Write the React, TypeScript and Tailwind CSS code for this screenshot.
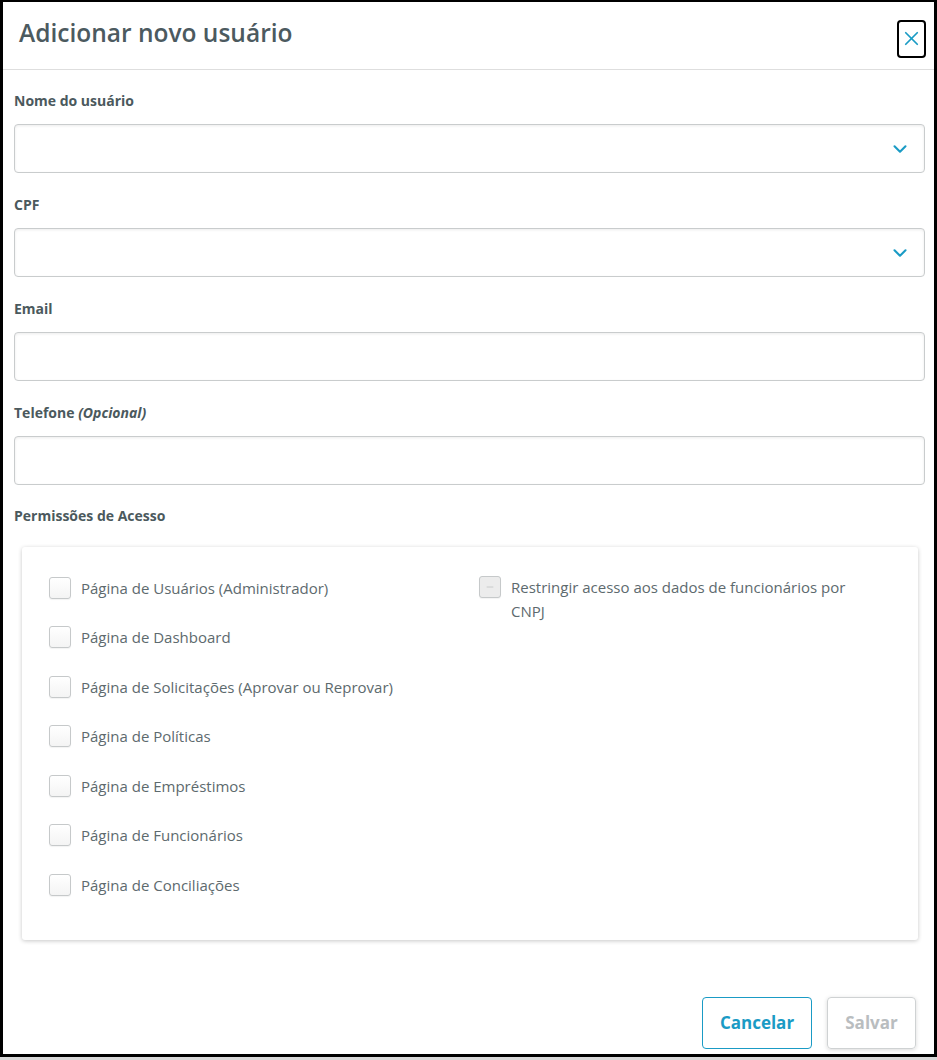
import { X, ChevronDown, Minus } from 'lucide-react'

const permissoes = [
  'Página de Usuários (Administrador)',
  'Página de Dashboard',
  'Página de Solicitações (Aprovar ou Reprovar)',
  'Página de Políticas',
  'Página de Empréstimos',
  'Página de Funcionários',
  'Página de Conciliações',
]

function Campo({ label, opcional, select }: { label: string; opcional?: boolean; select?: boolean }) {
  return (
    <div className="mb-[22px]">
      <label className="block text-[14px] font-bold text-[#4b595d] mb-[13px] leading-[20px]">
        {label} {opcional && <em className="italic">(Opcional)</em>}
      </label>
      <div className="relative h-[49px] rounded-[4px] border border-[#c9cccd] bg-white shadow-[inset_0_1px_3px_rgba(0,0,0,0.08)]">
        {select && (
          <ChevronDown className="absolute right-[13px] top-[13px] text-[#1a9bc5]" size={22} strokeWidth={2.3} />
        )}
      </div>
    </div>
  )
}

function Checkbox({ indeterminate }: { indeterminate?: boolean }) {
  return (
    <span
      className={`flex items-center justify-center w-[22px] h-[22px] shrink-0 rounded-[3px] border border-[#c6c9ca] shadow-[0_1px_1px_rgba(0,0,0,0.05)] ${
        indeterminate ? 'bg-[#ececec]' : 'bg-gradient-to-b from-white to-[#f4f4f4]'
      }`}
    >
      {indeterminate && <Minus size={10} strokeWidth={1.5} className="text-[#b5b8b9]" />}
    </span>
  )
}

export default function App() {
  return (
    <div className="h-[1060px] bg-[#d8d8d8] font-['Open_Sans','Lato',sans-serif]">
      <div className="h-[1057px] bg-white border-t-2 border-x-[3px] border-b-[3px] border-black flex flex-col">
        {/* Header */}
        <div className="h-[68px] border-b border-[#dedede] flex items-center justify-between pl-[16px] pr-[8px]">
          <h1 className="text-[24.5px] font-semibold text-[#4c5a5f] -mt-[4px]">Adicionar novo usuário</h1>
          <button className="w-[29px] h-[38px] mt-[6px] rounded-[4px] border-2 border-black flex items-center justify-center text-[#1a9bc5]">
            <X size={23} strokeWidth={1.8} />
          </button>
        </div>

        {/* Form */}
        <div className="pl-[11px] pr-[9px] pt-[21px]">
          <Campo label="Nome do usuário" select />
          <Campo label="CPF" select />
          <Campo label="Email" />
          <Campo label="Telefone" opcional />

          <p className="text-[14px] font-bold text-[#4b595d] leading-[20px] -mt-[1px]">Permissões de Acesso</p>

          <div className="ml-[8px] mr-[7px] mt-[21px] rounded-[3px] bg-white shadow-[0_1px_4px_rgba(0,0,0,0.22)] pt-[16px] pb-[30px] pl-[27px] grid grid-cols-[430px_1fr]">
            <div className="flex flex-col">
              {permissoes.map(p => (
                <div key={p} className="h-[49.5px] flex items-center gap-[10px]">
                  <Checkbox />
                  <span className="text-[15px] text-[#5d6a6e]">{p}</span>
                </div>
              ))}
            </div>
            <div className="pt-[12px]">
              <div className="flex items-start gap-[10px] pr-[30px]">
                <span className="mt-[1px]">
                  <Checkbox indeterminate />
                </span>
                <span className="text-[15px] leading-[24px] text-[#5d6a6e] max-w-[355px]">
                  Restringir acesso aos dados de funcionários por CNPJ
                </span>
              </div>
            </div>
          </div>
        </div>

        {/* Footer */}
        <div className="mt-auto flex justify-end gap-[15px] pr-[18px] pb-[5px]">
          <button className="w-[110px] h-[52px] rounded-[4px] border border-[#1a9bc5] text-[17px] font-bold text-[#1a9bc5]">
            Cancelar
          </button>
          <button className="w-[89px] h-[52px] rounded-[4px] border border-[#cfd2d3] text-[17px] font-bold text-[#b9bdbf] shadow-[0_1px_4px_rgba(0,0,0,0.15)]">
            Salvar
          </button>
        </div>
      </div>
    </div>
  )
}
